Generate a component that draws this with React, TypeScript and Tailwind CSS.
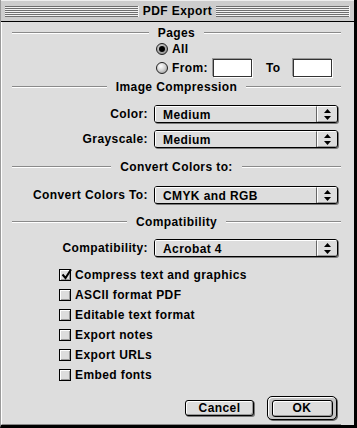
import React from "react";

const stripes =
  "flex-1 h-[11px] bg-[repeating-linear-gradient(to_bottom,#6f6f6f_0px,#6f6f6f_1px,#f2f2f2_1px,#f2f2f2_2px)] border-r border-[#f2f2f2]";

function SectionHeader({ title }: { title: string }) {
  return (
    <div className="flex items-center gap-[9px] h-[14px]">
      <div className="flex-1 h-0 border-t border-t-[#8a8a8a] border-b border-b-white" />
      <span className="leading-none">{title}</span>
      <div className="flex-1 h-0 border-t border-t-[#8a8a8a] border-b border-b-white" />
    </div>
  );
}

function Radio({ checked }: { checked?: boolean }) {
  return (
    <span
      className={
        "w-[12px] h-[12px] rounded-full border border-[#222] flex items-center justify-center " +
        (checked
          ? "bg-[radial-gradient(circle_at_40%_35%,#d8d8d8,#9a9a9a_70%,#666)]"
          : "bg-[radial-gradient(circle_at_38%_32%,#ffffff,#d6d6d6_45%,#8c8c8c)]")
      }
    >
      {checked && <span className="w-[6px] h-[6px] rounded-full bg-black" />}
    </span>
  );
}

function Popup({ value }: { value: string }) {
  return (
    <div className="w-[184px] h-[18px] rounded-[3px] border border-black bg-[#dddddd] shadow-[1px_1px_0_#7a7a7a] flex overflow-hidden">
      <div className="flex-1 flex items-center pl-[7px] border-t border-l border-white border-r border-r-[#666]">
        <span className="leading-none">{value}</span>
      </div>
      <div className="w-[20px] flex items-center justify-center border-t border-l border-white border-b border-b-[#999]">
        <svg width="7" height="11" viewBox="0 0 7 11">
          <polygon points="3.5,0 7,4 0,4" fill="#000" />
          <polygon points="0,7 7,7 3.5,11" fill="#000" />
        </svg>
      </div>
    </div>
  );
}

function PopupRow({ label, value }: { label: string; value: string }) {
  return (
    <div className="flex items-center h-[18px]">
      <span className="w-[136px] text-right leading-none">{label}</span>
      <div className="ml-[6px]">
        <Popup value={value} />
      </div>
    </div>
  );
}

function Checkbox({ checked }: { checked?: boolean }) {
  return (
    <span className="relative w-[12px] h-[12px] border border-black bg-[#dddddd] shadow-[inset_1px_1px_0_#fff,inset_-1px_-1px_0_#999]">
      {checked && (
        <svg className="absolute left-[1px] top-[-2px]" width="11" height="12" viewBox="0 0 11 12">
          <path d="M1.5 6.5 L4.5 10 L10 1.5" stroke="#000" strokeWidth="2" fill="none" />
        </svg>
      )}
    </span>
  );
}

function CheckRow({ label, checked }: { label: string; checked?: boolean }) {
  return (
    <div className="flex items-center h-[20px] pl-[47px] gap-[4px]">
      <Checkbox checked={checked} />
      <span className="leading-none">{label}</span>
    </div>
  );
}

function TextBox() {
  return <div className="w-[39px] h-[18px] bg-white border border-[#333] shadow-[1px_1px_0_#fff,-1px_-1px_0_#999]" />;
}

export default function App() {
  return (
    <div className="w-[357px] h-[428px] flex flex-col border-l border-[#9a9a9a] border-r-[3px] border-b-[3px] border-r-black border-b-black bg-[#dddddd] text-[12px] font-bold tracking-[0.4px] text-black font-['Liberation_Sans',Arial,sans-serif]">
      <div className="h-[22px] flex items-center pl-[4px] pr-[4px] bg-[#cdcdcd] border-b border-black border-t border-t-[#eeeeee]">
        <div className={stripes} />
        <span className="px-[4px] leading-none">PDF Export</span>
        <div className={stripes} />
      </div>

      <div className="flex-1 flex flex-col border-l border-white border-b border-b-[#888] pl-[10px] w-[340px]">
        <div className="mt-[4px]">
          <SectionHeader title="Pages" />
        </div>
        <div className="mt-[1px] h-[16px] flex items-center pl-[144px] gap-[4px]">
          <Radio checked />
          <span className="leading-none">All</span>
        </div>
        <div className="mt-[1px] h-[20px] flex items-center pl-[144px]">
          <Radio />
          <span className="ml-[4px] leading-none">From:</span>
          <div className="ml-[5px]">
            <TextBox />
          </div>
          <span className="ml-[14px] leading-none">To</span>
          <div className="ml-[12px]">
            <TextBox />
          </div>
        </div>

        <div className="mt-[2px]">
          <SectionHeader title="Image Compression" />
        </div>
        <div className="mt-[11px]">
          <PopupRow label="Color:" value="Medium" />
        </div>
        <div className="mt-[7px]">
          <PopupRow label="Grayscale:" value="Medium" />
        </div>

        <div className="mt-[12px]">
          <SectionHeader title="Convert Colors to:" />
        </div>
        <div className="mt-[12px]">
          <PopupRow label="Convert Colors To:" value="CMYK and RGB" />
        </div>

        <div className="mt-[11px]">
          <SectionHeader title="Compatibility" />
        </div>
        <div className="mt-[10px]">
          <PopupRow label="Compatibility:" value="Acrobat 4" />
        </div>

        <div className="mt-[8px] flex flex-col">
          <CheckRow label="Compress text and graphics" checked />
          <CheckRow label="ASCII format PDF" />
          <CheckRow label="Editable text format" />
          <CheckRow label="Export notes" />
          <CheckRow label="Export URLs" />
          <CheckRow label="Embed fonts" />
        </div>

        <div className="mt-[11px] flex items-center justify-end pr-[4px] gap-[13px]">
          <button className="w-[69px] h-[16px] rounded-[3px] border border-black bg-[#dddddd] shadow-[inset_1px_1px_0_#fff,inset_-1px_-1px_0_#999,1px_1px_0_#777] flex items-center justify-center leading-none">
            Cancel
          </button>
          <div className="w-[70px] h-[24px] rounded-[5px] border border-black bg-[#c4c4c4] shadow-[inset_1px_1px_0_#fff,1px_1px_0_#666] flex items-center justify-center">
            <button className="w-[61px] h-[17px] rounded-[3px] border border-black bg-[#dddddd] shadow-[inset_1px_1px_0_#fff,inset_-1px_-1px_0_#999] flex items-center justify-center leading-none">
              OK
            </button>
          </div>
        </div>
      </div>
    </div>
  );
}
